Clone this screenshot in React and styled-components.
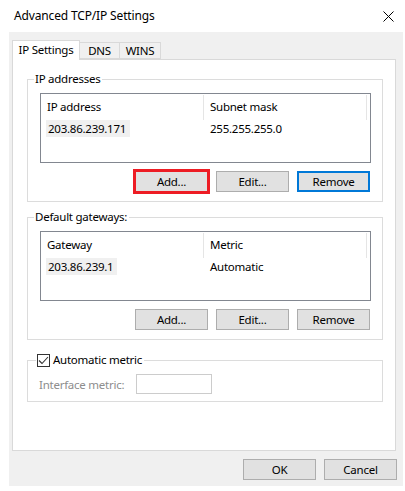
import React from "react"
import styled, { createGlobalStyle } from "styled-components"

const GlobalStyle = createGlobalStyle`
    html, body {
        margin: 0;
        padding: 0;
        background: #ffffff;
    }
    body {
        font-family: "Noto Sans", "DejaVu Sans", sans-serif;
        font-size: 11.5px;
        letter-spacing: -0.25px;
        color: #000000;
    }
    * {
        box-sizing: border-box;
    }
`

const Window = styled.div`
    width: 405px;
    height: 491px;
    background: #ffffff;
    display: flex;
    flex-direction: column;
`

const TitleBar = styled.div`
    height: 32px;
    display: flex;
    align-items: center;
    justify-content: space-between;
    padding: 0 11px 0 14px;
`

const Title = styled.span`
    font-size: 12px;
    letter-spacing: -0.15px;
    line-height: 16px;
`

const Client = styled.div`
    margin-left: 9px;
    width: 394px;
    height: 454px;
    background: #f0f0f0;
    padding: 8px 6px 0 3px;
    display: flex;
    flex-direction: column;
`

const TabStrip = styled.div`
    display: flex;
    align-items: flex-end;
    height: 19px;
    position: relative;
    z-index: 1;
`

const Tab = styled.div`
    width: ${props => props.$w}px;
    height: ${props => props.$active ? 20 : 17}px;
    margin-bottom: ${props => props.$active ? -1 : 0}px;
    margin-left: ${props => props.$first ? 0 : -1}px;
    background: ${props => props.$active ? "#ffffff" : "#f0f0f0"};
    border: 1px solid #d9d9d9;
    border-bottom: ${props => props.$active ? "none" : "1px solid #d9d9d9"};
    display: flex;
    align-items: center;
    justify-content: center;
    line-height: 16px;
    padding-bottom: ${props => props.$active ? 2 : 0}px;
`

const Panel = styled.div`
    width: 384px;
    height: 392px;
    background: #ffffff;
    border: 1px solid #d9d9d9;
    padding: 11px 0 0 14px;
    display: flex;
    flex-direction: column;
    gap: 7px;
`

const Group = styled.fieldset`
    width: 356px;
    margin: 0;
    margin-top: ${props => props.$top || 0}px;
    padding: 0;
    border: 1px solid #dcdcdc;
    min-width: 0;
`

const Legend = styled.legend`
    margin-left: ${props => props.$indent || 6}px;
    padding: 0 2px 0 1px;
    line-height: 16px;
    display: flex;
    align-items: center;
    gap: 3px;
`

const GroupBody = styled.div`
    padding: 6px 11px ${props => props.$bottom || 9}px ${props => props.$left || 12}px;
    display: flex;
    flex-direction: column;
`

const ListView = styled.div`
    height: 70px;
    border: 1px solid #828790;
    background: #ffffff;
`

const ListRow = styled.div`
    display: grid;
    grid-template-columns: 163px 163px;
    height: ${props => props.$header ? 26 : 17}px;
    align-items: ${props => props.$header ? "stretch" : "center"};
`

const HeaderCell = styled.div`
    display: flex;
    align-items: center;
    padding-left: 6px;
    padding-bottom: 2px;
    border-right: 1px solid #e5e5e5;
    margin-top: 1px;
`

const Cell = styled.div`
    padding-left: ${props => props.$first ? 5 : 6}px;
    line-height: 17px;
`

const Selected = styled.span`
    display: inline-block;
    background: #f0f0f0;
    padding: 0 4px 0 2px;
    line-height: 17px;
`

const ButtonRow = styled.div`
    display: flex;
    justify-content: flex-end;
    gap: 8px;
    margin-top: 8px;
    padding-right: 1px;
`

const Button = styled.div`
    width: 73px;
    height: 21px;
    background: #e1e1e1;
    border: ${props => props.$focus ? "2px solid #0078d7" : "1px solid #adadad"};
    display: flex;
    align-items: center;
    justify-content: center;
    line-height: 16px;
    outline: ${props => props.$marked ? "3px solid #ed1c24" : "none"};
    outline-offset: -1px;
`

const CheckBox = styled.span`
    width: 13px;
    height: 13px;
    border: 1px solid #333333;
    background: #ffffff;
    display: inline-flex;
    align-items: center;
    justify-content: center;
`

const MetricRow = styled.div`
    display: flex;
    align-items: center;
`

const DisabledLabel = styled.span`
    width: 97px;
    color: #8d8d8d;
`

const TextBox = styled.div`
    width: 76px;
    height: 20px;
    border: 1px solid #cccccc;
    background: #ffffff;
`

const Footer = styled.div`
    display: flex;
    justify-content: flex-end;
    gap: 8px;
    margin-top: 8px;
`

const CloseIcon = () => (
    <svg width="11" height="11" viewBox="0 0 11 11">
        <path d="M0.5 0.5 L10.5 10.5 M10.5 0.5 L0.5 10.5" stroke="#000" strokeWidth="1" />
    </svg>
)

const Check = () => (
    <svg width="11" height="11" viewBox="0 0 11 11">
        <path d="M1 5.5 L4 8.5 L10 2" stroke="#333" strokeWidth="1.1" fill="none" />
    </svg>
)

const AddressList = ({ columns, values }) => (
    <ListView>
        <ListRow $header>
            <HeaderCell>{columns[0]}</HeaderCell>
            <HeaderCell>{columns[1]}</HeaderCell>
        </ListRow>
        <ListRow>
            <Cell $first><Selected>{values[0]}</Selected></Cell>
            <Cell>{values[1]}</Cell>
        </ListRow>
    </ListView>
)

const Actions = ({ marked, focus }) => (
    <ButtonRow>
        <Button $marked={marked}>Add...</Button>
        <Button>Edit...</Button>
        <Button $focus={focus}>Remove</Button>
    </ButtonRow>
)

const App = () => (
    <Window>
        <GlobalStyle />
        <TitleBar>
            <Title>Advanced TCP/IP Settings</Title>
            <CloseIcon />
        </TitleBar>
        <Client>
            <TabStrip>
                <Tab $w={68} $active $first>IP Settings</Tab>
                <Tab $w={41}>DNS</Tab>
                <Tab $w={42}>WINS</Tab>
            </TabStrip>
            <Panel>
                <Group>
                    <Legend>IP addresses</Legend>
                    <GroupBody>
                        <AddressList
                            columns={["IP address", "Subnet mask"]}
                            values={["203.86.239.171", "255.255.255.0"]}
                        />
                        <Actions marked focus />
                    </GroupBody>
                </Group>
                <Group>
                    <Legend>Default gateways:</Legend>
                    <GroupBody>
                        <AddressList
                            columns={["Gateway", "Metric"]}
                            values={["203.86.239.1", "Automatic"]}
                        />
                        <Actions />
                    </GroupBody>
                </Group>
                <Group $top={5}>
                    <Legend $indent={8}>
                        <CheckBox><Check /></CheckBox>
                        Automatic metric
                    </Legend>
                    <GroupBody $left={11} $bottom={7}>
                        <MetricRow>
                            <DisabledLabel>Interface metric:</DisabledLabel>
                            <TextBox />
                        </MetricRow>
                    </GroupBody>
                </Group>
            </Panel>
            <Footer>
                <Button>OK</Button>
                <Button>Cancel</Button>
            </Footer>
        </Client>
    </Window>
)

export default App
